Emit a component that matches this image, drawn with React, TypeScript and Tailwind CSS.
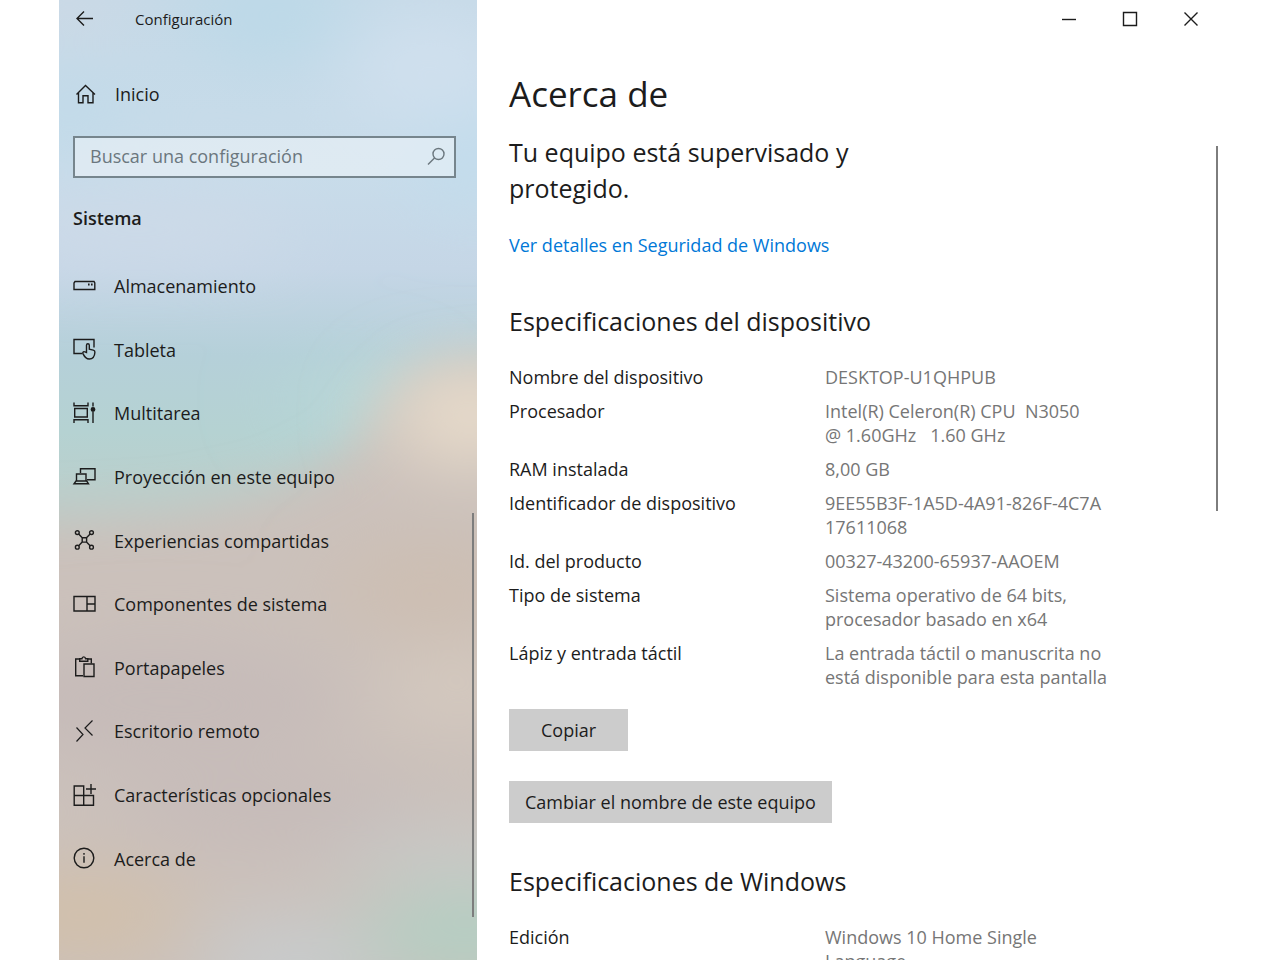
import React, { useState } from 'react';

const Icon = ({ children }: { children: React.ReactNode }) => (
  <svg
    viewBox="0 0 24 24"
    className="w-6 h-6 shrink-0"
    fill="none"
    stroke="currentColor"
    strokeWidth="1.4"
    aria-hidden="true"
  >
    {children}
  </svg>
);

const navItems = [
  {
    label: 'Almacenamiento',
    icon: (
      <>
        <path d="M3 7.500h19l.8 1.500v6.500H2V9z" />
        <path d="M16 10.500h1.600M19 10.500h1.600" strokeWidth="1.800" />
      </>
    ),
  },
  {
    label: 'Tableta',
    icon: (
      <>
        <path d="M10.500 16.500H2v-14h20v8" />
        <path d="M14.500 15.500V8.300c0-2 2.800-2 2.800 0v4l4 .8c1.300.3 1.700 1.200 1.600 2.200-.2 4.200-1.900 6.700-5.600 6.700-3.400 0-4.800-2-6.300-5.400-.7-1.700 1-2.400 2-1.600z" />
      </>
    ),
  },
  {
    label: 'Multitarea',
    icon: (
      <>
        <path d="M2 1.500v3.300h14V1.500M2 22v-3.300h14V22M2.700 7.500h12.600v8.500H2.700z" />
        <path d="M21 1.500v4M21 11v11" />
        <circle cx="21" cy="8.500" r="1.700" fill="currentColor" />
      </>
    ),
  },
  {
    label: 'Proyección en este equipo',
    icon: (
      <>
        <path d="M8.500 8V3.800H23v11h-8" />
        <path d="M4.500 16V9h9.500v7M2 18.800h14.500L14.700 16H4z" />
      </>
    ),
  },
  {
    label: 'Experiencias compartidas',
    icon: (
      <>
        <circle cx="5.300" cy="4.600" r="1.900" />
        <circle cx="19.500" cy="4.600" r="1.900" />
        <circle cx="5.300" cy="19.200" r="1.900" />
        <circle cx="19.500" cy="19.200" r="1.900" />
        <path d="M6.700 6l3.500 3.700M18.100 6l-3.600 3.700M6.700 17.800l3.500-3.700M18.100 17.800l-3.600-3.700M10.200 9.700h4.400v4.400h-4.400z" />
      </>
    ),
  },
  {
    label: 'Componentes de sistema',
    icon: <path d="M2 4.500h21v14.500H2zM15 4.500V19M15 12h8" />,
  },
  {
    label: 'Portapapeles',
    icon: (
      <>
        <path d="M11 20.700H3.700V4h4M15.500 4h3.800v4.500" />
        <path d="M7.700 6.200V3.800h2.200c.3-2.600 3.400-2.600 3.700 0h2.200v2.400z" />
        <path d="M12 9h10v12.500H12z" />
      </>
    ),
  },
  {
    label: 'Escritorio remoto',
    icon: <path d="M4.500 8.500l6.500 7-6.500 7M20.500 1.500L13 9l7.500 7.500" strokeWidth="1.200" />,
  },
  {
    label: 'Características opcionales',
    icon: <path d="M2.200 3h9.500v19.300H2.200zM2.200 12.500H21.500v9.800H11.700M19 1v10M14 6h10" />,
  },
  {
    label: 'Acerca de',
    icon: (
      <>
        <circle cx="12" cy="12" r="9.800" />
        <path d="M12 10.300v6.500M12 7v1.800" />
      </>
    ),
  },
];

const deviceSpecs = [
  ['Nombre del dispositivo', 'DESKTOP-U1QHPUB'],
  ['Procesador', 'Intel(R) Celeron(R) CPU  N3050\n@ 1.60GHz   1.60 GHz'],
  ['RAM instalada', '8,00 GB'],
  ['Identificador de dispositivo', '9EE55B3F-1A5D-4A91-826F-4C7A\n17611068'],
  ['Id. del producto', '00327-43200-65937-AAOEM'],
  ['Tipo de sistema', 'Sistema operativo de 64 bits,\nprocesador basado en x64'],
  ['Lápiz y entrada táctil', 'La entrada táctil o manuscrita no\nestá disponible para esta pantalla'],
];

const windowsSpecs = [['Edición', 'Windows 10 Home Single\nLanguage']];

const SpecList = ({ rows }: { rows: string[][] }) => (
  <dl className="flex flex-col gap-2.5 text-[18px] leading-6">
    {rows.map(([name, value]) => (
      <div key={name} className="flex">
        <dt className="w-[316px] shrink-0">{name}</dt>
        <dd className="whitespace-pre text-[#767676]">{value}</dd>
      </div>
    ))}
  </dl>
);

// Blurred desktop showing through the acrylic sidebar
const Wallpaper = () => (
  <svg
    viewBox="0 0 418 960"
    preserveAspectRatio="none"
    className="absolute inset-0 w-full h-full"
    aria-hidden="true"
  >
    <defs>
      <linearGradient id="base" x1="0" y1="0" x2="0" y2="1">
        <stop offset="0" stopColor="#c5d9e7" />
        <stop offset="0.18" stopColor="#c8dcea" />
        <stop offset="0.28" stopColor="#c5d6e6" />
        <stop offset="0.37" stopColor="#b5d0d9" />
        <stop offset="0.45" stopColor="#b5d2d2" />
        <stop offset="0.51" stopColor="#bacfcc" />
        <stop offset="1" stopColor="#bacfcc" />
      </linearGradient>
      <filter id="soft" x="-50%" y="-50%" width="200%" height="200%">
        <feGaussianBlur stdDeviation="24" />
      </filter>
      <filter id="softer" x="-100%" y="-100%" width="300%" height="300%">
        <feGaussianBlur stdDeviation="42 34" />
      </filter>
    </defs>
    <rect width="418" height="960" fill="url(#base)" />
    <g filter="url(#softer)">
      <ellipse cx="215" cy="15" rx="80" ry="50" fill="#bbd9e8" />
      <ellipse cx="10" cy="110" rx="60" ry="50" fill="#c1dae9" />
      <ellipse cx="370" cy="70" rx="90" ry="60" fill="#d0e0ee" />
      <ellipse cx="10" cy="10" rx="60" ry="35" fill="#ced9e5" />
      <ellipse cx="80" cy="230" rx="160" ry="35" fill="#cedae8" />
      <ellipse cx="418" cy="160" rx="60" ry="50" fill="#c1dcec" />
      <ellipse cx="290" cy="400" rx="60" ry="35" fill="#b7d8d8" />
    </g>
    <g filter="url(#soft)">
      <path d="M-80 522L120 512 220 490 290 455 330 400 370 366 500 352V1060H-80z" fill="#cbc1bb" />
    </g>
    <g filter="url(#softer)">
      <ellipse cx="410" cy="415" rx="80" ry="52" fill="#e8dccb" />
      <ellipse cx="370" cy="590" rx="90" ry="45" fill="#cdbeb1" />
      <ellipse cx="400" cy="690" rx="80" ry="35" fill="#d6cabf" />
      <ellipse cx="100" cy="700" rx="190" ry="60" fill="#c6bbb9" />
      <ellipse cx="210" cy="810" rx="150" ry="40" fill="#c6bbb9" />
      <ellipse cx="20" cy="915" rx="110" ry="45" fill="#d2c0aa" />
      <ellipse cx="230" cy="965" rx="90" ry="45" fill="#c8ccce" />
      <ellipse cx="390" cy="855" rx="120" ry="25" fill="#c8cbc9" />
      <ellipse cx="410" cy="935" rx="110" ry="45" fill="#b3cfc3" />
    </g>
  </svg>
);

const Sidebar = () => {
  const [query, setQuery] = useState('');

  return (
    <aside className="relative w-[418px] shrink-0 overflow-hidden">
      <Wallpaper />
      <div className="relative h-full flex flex-col pb-[70px]">
        <header className="h-[38px] flex items-center pl-[14px]">
          <button aria-label="Atrás">
            <Icon>
              <path d="M20 11.500H4.500M11 4.500l-7 7 7 7" />
            </Icon>
          </button>
          <h1 className="ml-[38px] text-[15px]">Configuración</h1>
        </header>

        <a href="#inicio" className="mt-9 h-10 flex items-center gap-[18px] pl-[14px] text-[18px]">
          <Icon>
            <path d="M3.500 12.500L12.500 3.500l9.500 9M5.500 11v9.800h4.500v-7h5v7h5V11" />
          </Icon>
          Inicio
        </a>

        <label className="mt-[22px] ml-[14px] mr-[21px] h-[42px] flex items-center border-2 border-[#76858d] bg-white/40 pl-[15px] pr-1.5">
          <input
            type="text"
            aria-label="Buscar una configuración"
            placeholder="Buscar una configuración"
            value={query}
            onChange={(e) => setQuery(e.target.value)}
            className="flex-1 min-w-0 bg-transparent pb-0.5 text-[18px] outline-none placeholder:text-[#6b777e]"
          />
          <span className="text-[#6b777e]">
            <Icon>
              <circle cx="14.500" cy="9" r="5.500" />
              <path d="M10.500 13L4 19.500" />
            </Icon>
          </span>
        </label>

        <h2 className="mt-[26px] mb-[22px] ml-[14px] text-[18px] leading-7 font-semibold">Sistema</h2>

        <nav className="flex-1 flex flex-col">
          {navItems.map((item) => (
            <a key={item.label} href="#" className="flex-1 flex items-center gap-[18px] pl-[13px] text-[18px]">
              <Icon>{item.icon}</Icon>
              <span className="pt-0.5">{item.label}</span>
            </a>
          ))}
        </nav>
      </div>
      <div className="absolute right-[3px] top-[513px] bottom-[43px] w-[2px] bg-[#7d7d7d]" />
    </aside>
  );
};

const WindowButtons = () => (
  <div className="flex justify-end h-[38px]">
    <button aria-label="Minimizar" className="w-[61px] flex items-center justify-center">
      <Icon><path d="M5 12.500h14" /></Icon>
    </button>
    <button aria-label="Maximizar" className="w-[61px] flex items-center justify-center">
      <Icon><path d="M5.500 5.500h13v13h-13z" /></Icon>
    </button>
    <button aria-label="Cerrar" className="w-[61px] flex items-center justify-center">
      <Icon><path d="M5.500 5.500l13 13M18.500 5.500l-13 13" /></Icon>
    </button>
  </div>
);

export default function App() {
  return (
    <div className="h-screen overflow-hidden bg-white px-[59px] flex font-['Open_Sans','Noto_Sans',sans-serif] text-[#1c1c1c]">
      <Sidebar />
      <main className="relative flex-1 min-w-0">
        <WindowButtons />
        <div className="pl-8">
          <h1 className="mt-8 text-[35px] leading-[48px]">Acerca de</h1>
          <p className="mt-4 w-[380px] text-[25px] leading-9">Tu equipo está supervisado y protegido.</p>
          <a href="#seguridad" className="mt-[27px] block text-[18px] leading-6 text-[#0078d7]">
            Ver detalles en Seguridad de Windows
          </a>
          <h2 className="mt-[46px] mb-[26px] text-[25px] leading-9">Especificaciones del dispositivo</h2>
          <SpecList rows={deviceSpecs} />
          <div className="mt-5 flex flex-col items-start gap-[30px] text-[18px]">
            <button className="h-[42px] px-8 bg-[#cccccc]">Copiar</button>
            <button className="h-[42px] px-4 bg-[#cccccc]">Cambiar el nombre de este equipo</button>
          </div>
          <h2 className="mt-10 mb-[26px] text-[25px] leading-9">Especificaciones de Windows</h2>
          <SpecList rows={windowsSpecs} />
        </div>
        <div className="absolute right-[3px] top-[146px] w-[2px] h-[365px] bg-[#7d7d7d]" />
      </main>
    </div>
  );
}
